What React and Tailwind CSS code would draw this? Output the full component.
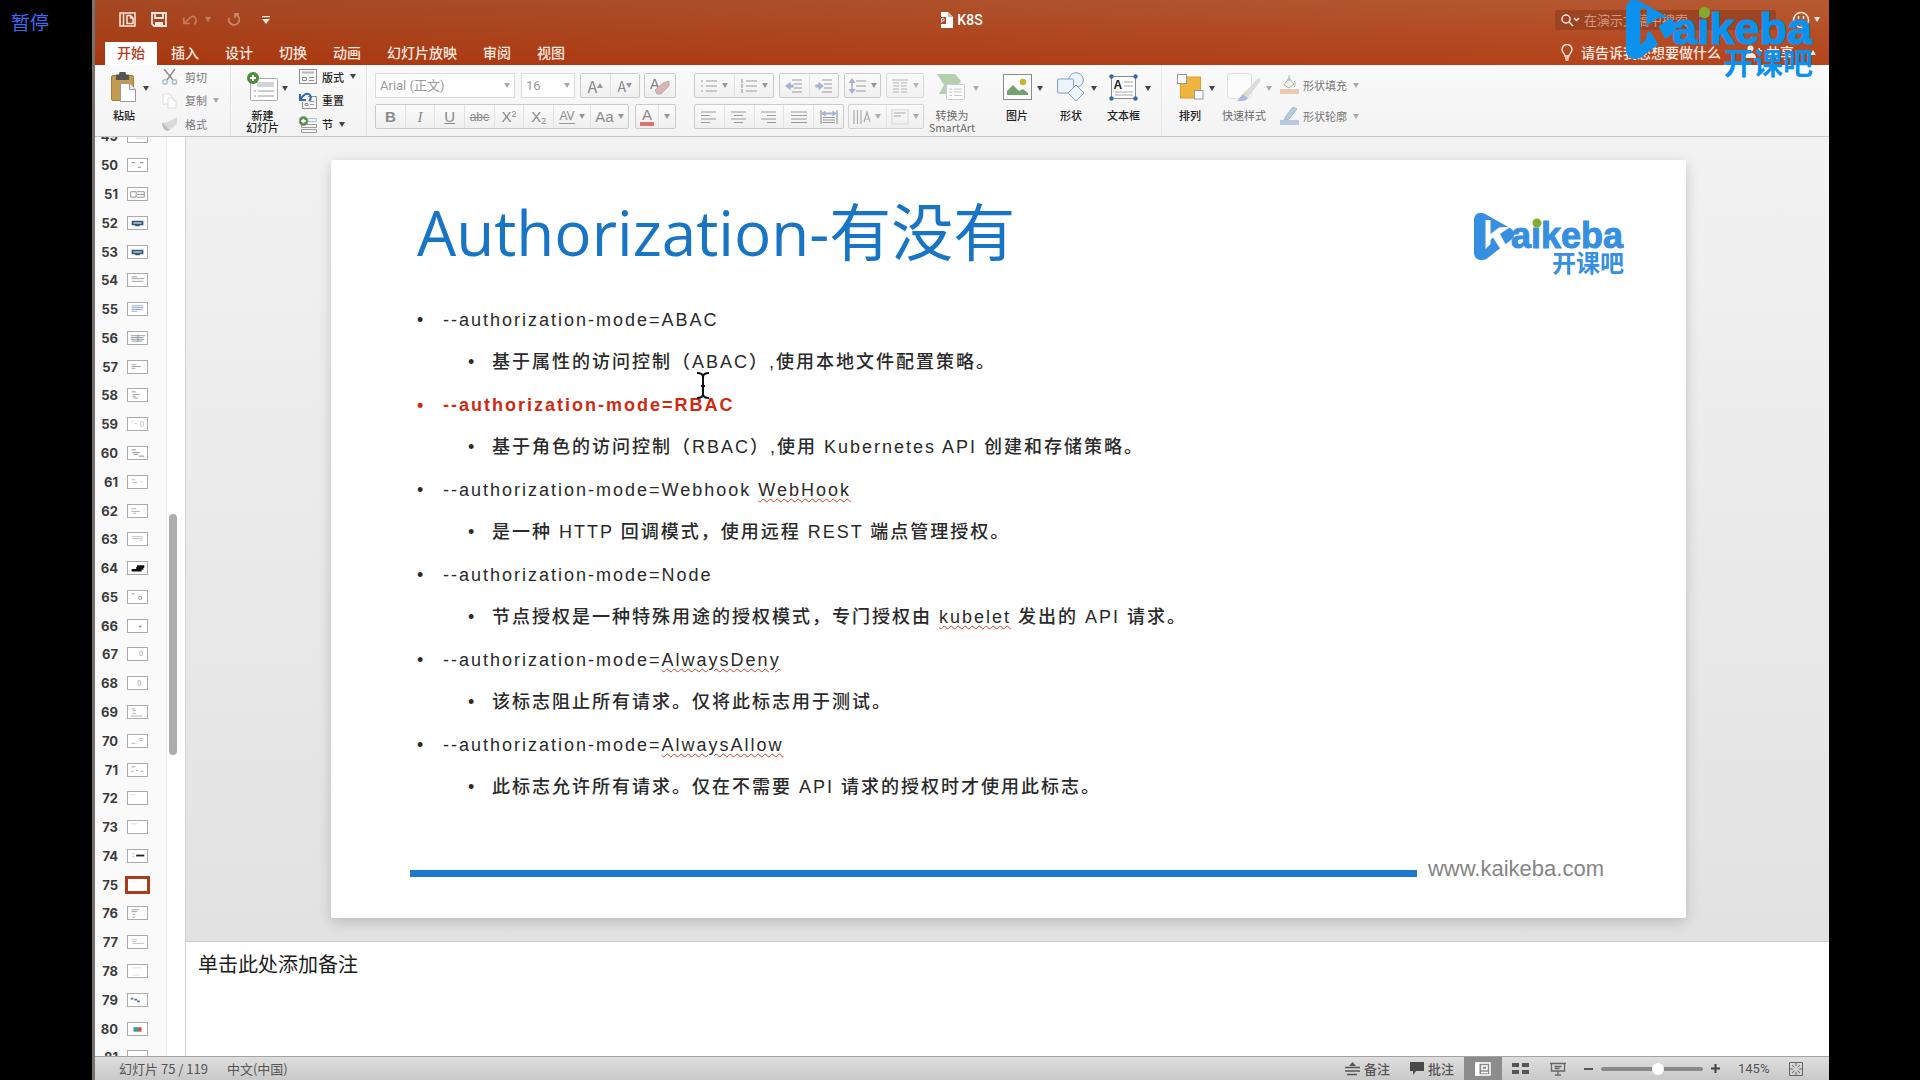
import React from "react";

const Caret = ({ className = "text-[#444]" }) => (
  <svg viewBox="0 0 6 5" className={`h-[5px] w-[6px] shrink-0 ${className}`} aria-hidden="true">
    <path d="M0 0h6L3 5z" fill="currentColor" />
  </svg>
);

const Logo = ({ id, className }) => (
  <svg viewBox="0 0 150 60" className={`overflow-visible ${className}`} role="img" aria-label="kaikeba 开课吧">
    <mask id={id}>
      <rect width="150" height="60" fill="#fff" />
      <path d="M11.500 7H16.500V21L25 14.500 37 13.500 26 21 32 32 27 37 19 24.500 16.500 27V31L11.500 36Z" fill="#000" />
    </mask>
    <path
      d="M0 8C0 0 6 -2 12 1.500L36 15C41.500 18.500 41.500 24 37 27L13 45.500C8 49 0 47 0 40Z"
      fill="currentColor"
      mask={`url(#${id})`}
    />
    <text x="37" y="35" fontFamily="'Liberation Sans', Arial, sans-serif" fontWeight="700" fontSize="36" fill="currentColor" stroke="currentColor" strokeWidth="1">
      aikeba
    </text>
    <circle cx="63" cy="10" r="4.500" fill="#84ab2e" />
    <text x="78" y="59" fontFamily="'Noto Sans CJK SC', sans-serif" fontWeight="700" fontSize="24" fill="currentColor">
      开课吧
    </text>
  </svg>
);

/* ---------- title bar ---------- */

const IconButton = ({ label, className = "", children }) => (
  <button type="button" aria-label={label} className={`flex items-center justify-center ${className}`}>
    {children}
  </button>
);

const TitleBar = () => (
  <div className="flex h-[42px] items-center pb-[3px]">
    <div className="flex w-[180px] items-center pl-6 text-[#fbe9e0]">
      <IconButton label="文件" className="w-[17px]">
        <svg viewBox="0 0 17 15" className="h-[15px] w-[17px]" fill="none" stroke="currentColor" strokeWidth="1.500">
          <path d="M1 1h15v13H1zM4.500 1v13M8 3.500h3.500L14 6v5.500H8zM11.500 3.500V6H14" />
        </svg>
      </IconButton>
      <IconButton label="保存" className="ml-[15px] w-4">
        <svg viewBox="0 0 16 15" className="h-[15px] w-4" fill="none" stroke="currentColor" strokeWidth="1.800">
          <path d="M1 1h14v13H3L1 12zM4 1v5h8V1" />
          <path d="M4 14v-4h8v4z" fill="currentColor" stroke="none" />
        </svg>
      </IconButton>
      <IconButton label="撤消" className="ml-4 w-7 gap-2 opacity-35">
        <svg viewBox="0 0 16 14" className="h-[14px] w-4" fill="none" stroke="currentColor" strokeWidth="1.800">
          <path d="M1 4v7h7M1.500 10.500L8 4.500C11 1.500 15 3 15 7.500c0 2-1 3.500-2 4.500" />
        </svg>
        <Caret className="h-1 w-1" />
      </IconButton>
      <IconButton label="恢复" className="ml-[15px] w-[14px] opacity-40">
        <svg viewBox="0 0 14 14" className="h-[14px] w-[14px]" fill="none" stroke="currentColor" strokeWidth="1.800">
          <path d="M9 5V1h4M9.500 1.500A5.300 5.300 0 1 1 3 5" />
        </svg>
      </IconButton>
      <IconButton label="自定义" className="ml-[22px] w-2">
        <svg viewBox="0 0 8 8" className="h-2 w-2" fill="currentColor">
          <path d="M0 0h8v1.200H0zM0 3h8L4 8z" />
        </svg>
      </IconButton>
    </div>
    <div className="flex flex-1 items-center justify-center gap-1 pl-[92px] text-sm font-medium text-white">
      <svg viewBox="0 0 14 16" className="h-4 w-[14px]">
        <path d="M2 0h7l5 5v11H2z" fill="#fff" />
        <path d="M9 0l5 5H9z" fill="#c9b6ae" />
        <path d="M0 5h7v7H0z" fill="#b9401d" />
        <path d="M2.500 10.500v-4h1.500a1.200 1.200 0 0 1 0 2.400H2.500" stroke="#fff" fill="none" />
      </svg>
      <h1 className="font-['Roboto']">K8S</h1>
    </div>
    <div className="flex items-center pr-[9px]">
      <label className="flex h-5 w-[221px] items-center rounded-xs bg-[#97401f]/80 pl-[5px] text-[#fbe9e0]">
        <svg viewBox="0 0 20 14" className="h-[14px] w-5 shrink-0" fill="none" stroke="currentColor" strokeWidth="1.500">
          <circle cx="6" cy="6" r="4" />
          <path d="M9 9l4 4M14 5l2.500 2.500L19 5" />
        </svg>
        <input
          aria-label="在演示文稿中搜索"
          placeholder="在演示文稿中搜索"
          className="ml-1 w-full min-w-0 bg-transparent text-[13px] outline-none placeholder:text-[#d49a80]"
        />
      </label>
      <IconButton label="反馈" className="ml-4 gap-1 text-[#fbe9e0]">
        <svg viewBox="0 0 18 18" className="h-[18px] w-[18px]" fill="none" stroke="currentColor" strokeWidth="1.500">
          <circle cx="9" cy="9" r="7.500" />
          <path d="M5.500 10.500c1 3 6 3 7 0M6.500 5v3M11.500 5v3" />
        </svg>
        <Caret className="" />
      </IconButton>
    </div>
  </div>
);

const TABS = ["开始", "插入", "设计", "切换", "动画", "幻灯片放映", "审阅", "视图"];

const TabBar = () => (
  <nav className="flex h-[23px] items-stretch pl-[10px] text-sm font-medium">
    <div className="flex flex-1 gap-[2px]">
      {TABS.map((tab, i) => (
        <button
          key={tab}
          type="button"
          className={`px-3 pb-[3px] leading-5 ${i === 0 ? "bg-white text-[#b83a16]" : "text-[#fbe9e0]"}`}
        >
          {tab}
        </button>
      ))}
    </div>
    <div className="flex w-[268px] items-center pb-[3px] leading-5 text-[#fbe9e0]">
      <button type="button" className="flex items-center gap-2 whitespace-nowrap">
        <svg viewBox="0 0 12 17" className="h-[17px] w-3" fill="none" stroke="currentColor" strokeWidth="1.400">
          <path d="M4 12c0-2-3-3.500-3-6.500a5 5 0 0 1 10 0C11 8.500 8 10 8 12zM4 14h4M4.500 16h3" />
        </svg>
        <span>请告诉我您想要做什么</span>
      </button>
      <button type="button" className="ml-6 flex items-center gap-1 whitespace-nowrap">
        <svg viewBox="0 0 17 14" className="h-[14px] w-[17px]" fill="currentColor">
          <circle cx="5.500" cy="3.500" r="3" />
          <path d="M0 13c0-7 11-7 11 0zM12 5h1.500V3H15v2h2v1.500h-2v2h-1.500v-2H12z" />
        </svg>
        <span>共享</span>
      </button>
      <IconButton label="折叠功能区" className="ml-4 rotate-180">
        <Caret className="" />
      </IconButton>
    </div>
  </nav>
);

/* ---------- ribbon ---------- */

const Big = ({ label, icon, width, dim, caret = true }) => (
  <button
    type="button"
    className={`flex shrink-0 items-start pt-[7px] text-[11px] leading-3 ${dim ? "text-[#6b6b6b]" : "font-medium text-[#222]"}`}
  >
    <span className={`flex flex-col items-center ${width}`}>
      <span className="flex h-[30px] items-center">{icon}</span>
      <span className="mt-[7px] whitespace-pre text-center">{label}</span>
    </span>
    {caret && <Caret className={`mt-[14px] ${dim ? "text-[#aaa]" : "text-[#444]"}`} />}
  </button>
);

const Small = ({ label, icon, dim, caret, h = "h-6" }) => (
  <button
    type="button"
    className={`flex items-center text-[11px] ${h} ${dim ? "text-[#777]" : "font-medium text-[#222]"}`}
  >
    <span className="w-5">{icon}</span>
    <span className="ml-[3px] whitespace-nowrap">{label}</span>
    {caret && <Caret className={`ml-[6px] ${dim ? "text-[#aaa]" : "text-[#444]"}`} />}
  </button>
);

const PasteIcon = (
  <svg viewBox="0 0 26 30" className="h-[30px] w-[26px]">
    <rect x="0.500" y="3.500" width="22" height="25" rx="1.500" fill="#c39a52" stroke="#a67e38" />
    <path d="M5 2.500h3a3.500 3.500 0 0 1 7 0h3V8H5z" fill="#555" />
    <path d="M9.500 11.500h9l6 6v12h-15z" fill="#fff" stroke="#9a9a9a" />
    <path d="M18.500 11.500v6h6" fill="#eee" stroke="#9a9a9a" />
  </svg>
);
const CutIcon = (
  <svg viewBox="0 0 16 16" className="h-4 w-4" fill="none" strokeWidth="1.500">
    <path d="M2 0l9 11M13 0L5 11" stroke="#8c8c8c" />
    <circle cx="3" cy="13" r="2.200" stroke="#a9bfd4" />
    <circle cx="12.500" cy="13" r="2.200" stroke="#a9bfd4" />
  </svg>
);
const CopyIcon = (
  <svg viewBox="0 0 16 16" className="h-4 w-4" fill="#fff" stroke="#dcdcdc">
    <path d="M1 1h6l3 3v7H1z" />
    <path d="M6 5h5l3 3v7H6zM11 5v3h3" />
  </svg>
);
const BrushIcon = (
  <svg viewBox="0 0 16 16" className="h-4 w-4">
    <path d="M15 1v7l-7 6C5 14 1 11 0 7l6-1z" fill="#dadada" />
    <path d="M0 7l8 7-3 1C2 14 0 11 0 7z" fill="#bdbdbd" />
  </svg>
);
const Plus = ({ x, y, r }) => (
  <g>
    <circle cx={x} cy={y} r={r} fill="#4c8f3c" />
    <path d={`M${x - r / 2} ${y}h${r}M${x} ${y - r / 2}v${r}`} stroke="#fff" strokeWidth="1.800" />
  </g>
);
const NewSlideIcon = (
  <svg viewBox="0 0 32 30" className="h-[30px] w-8">
    <rect x="3.500" y="6.500" width="27" height="22" rx="1" fill="#fff" stroke="#a8a8a8" />
    <rect x="10" y="10" width="17" height="5" fill="#d2d5d8" />
    <path d="M7 19h2M11 19h16M7 24h2M11 24h16" stroke="#999" />
    <Plus x={6} y={6} r={6} />
  </svg>
);
const LayoutIcon = (
  <svg viewBox="0 0 18 15" className="h-[15px] w-[18px]" fill="none" stroke="#8f8f8f">
    <rect x="0.500" y="0.500" width="17" height="14" fill="#f6f6f6" />
    <path d="M3 3.500h12" stroke="#b5b5b5" strokeWidth="2" />
    <path d="M3.500 8.500h4v3h-4zM10 8.500h5M10 11.500h5" />
  </svg>
);
const ResetIcon = (
  <svg viewBox="0 0 18 18" className="h-[18px] w-[18px]" fill="none">
    <path d="M9 4.500h8.500v12h-14V10" fill="#f6f6f6" stroke="#8f8f8f" />
    <path d="M6 11.500h3v2H6zM11 9.500h4M11 12.500h4" stroke="#999" />
    <path d="M1 2v6h6M1.500 7.500C4 3 8 0 11 3c1.500 2 1 4-1 6" stroke="#2f6cb5" strokeWidth="2" />
  </svg>
);
const SectionIcon = (
  <svg viewBox="0 0 18 17" className="h-[17px] w-[18px]" fill="none" stroke="#9c9c9c">
    <path d="M9 2.500h8.500v3H9" stroke="#a9c3dd" />
    <path d="M2.500 8.500h15v3h-15zM2.500 13.500h15v3h-15z" fill="#f6f6f6" />
    <Plus x={4.500} y={5} r={4.500} />
  </svg>
);

const Bar = ({ children, className = "" }) => (
  <div
    className={`flex h-[25px] items-stretch divide-x divide-[#e2e2e2] rounded-xs border border-[#cbcbcb] bg-linear-to-b from-[#fbfbfb] to-[#efefef] text-[#8a8a8a] ${className}`}
  >
    {children}
  </div>
);

const BarButton = ({ label, children, caret, className = "flex-1" }) => (
  <button type="button" aria-label={label} className={`flex items-center justify-center gap-1 ${className}`}>
    {children}
    {caret && <Caret className="h-1 w-[5px] text-[#999]" />}
  </button>
);

const Lines = ({ d, extra, children }) => (
  <svg viewBox="0 0 18 16" className="h-4 w-[18px]" fill="none" stroke="#9a9a9a" strokeWidth="1.200">
    <path d={d} />
    {extra && <path d={extra} fill="#a3b4d4" stroke="#a3b4d4" />}
    {children}
  </svg>
);

const Picker = ({ label, value, className }) => (
  <div className={`relative h-[25px] border border-[#dcdcdc] bg-white ${className}`}>
    <select
      aria-label={label}
      className="block h-[23px] w-full appearance-none bg-transparent pl-1 font-['Roboto','Noto_Sans_CJK_SC',sans-serif] text-[13px] text-[#9a9a9a]"
    >
      <option>{value}</option>
    </select>
    <Caret className="pointer-events-none absolute top-[9px] right-1 text-[#aaa]" />
  </div>
);

const FontGroup = () => (
  <div className="flex w-[302px] shrink-0 flex-col gap-[6px] pt-2">
    <div className="flex items-start">
      <Picker label="字体" value="Arial (正文)" className="w-[140px]" />
      <Picker label="字号" value="16" className="ml-[6px] w-[54px]" />
      <Bar className="ml-[5px] w-[60px]">
        <BarButton label="增大字号">
          <span className="text-base leading-5">A</span>
          <span className="-ml-1 rotate-180">
            <Caret className="text-[#999]" />
          </span>
        </BarButton>
        <BarButton label="减小字号">
          <span className="text-sm leading-5">A</span>
          <span className="-ml-1">
            <Caret className="text-[#999]" />
          </span>
        </BarButton>
      </Bar>
      <Bar className="ml-1 w-8">
        <BarButton label="清除格式">
          <svg viewBox="0 0 20 18" className="h-[18px] w-5">
            <text x="0" y="12" fontSize="14" fontFamily="Liberation Sans" fill="#808080">A</text>
            <path d="M5 13l8-7 6-2v5l-8 8-4 0z" fill="#d9b5b5" stroke="#b9a3a3" strokeWidth="0.800" />
          </svg>
        </BarButton>
      </Bar>
    </div>
    <div className="flex">
      <Bar className="w-[254px] font-['Liberation_Sans'] text-[15px] leading-5">
        <BarButton label="加粗"><b>B</b></BarButton>
        <BarButton label="倾斜"><i className="font-['Liberation_Serif']">I</i></BarButton>
        <BarButton label="下划线"><u>U</u></BarButton>
        <BarButton label="删除线"><s className="text-xs">abc</s></BarButton>
        <BarButton label="上标"><span>X<sup className="text-[9px]">2</sup></span></BarButton>
        <BarButton label="下标"><span>X<sub className="text-[9px]">2</sub></span></BarButton>
        <BarButton label="字符间距" caret className="w-[37px]">
          <span className="border-b border-[#999] text-xs leading-[13px]">AV</span>
        </BarButton>
        <BarButton label="更改大小写" caret className="w-[37px]"><span>Aa</span></BarButton>
      </Bar>
      <Bar className="ml-[6px] w-[41px]">
        <BarButton label="字体颜色">
          <span className="border-b-4 border-[#d9756a] px-[2px] font-['Liberation_Sans'] text-[15px] leading-[15px]">A</span>
        </BarButton>
        <BarButton label="字体颜色选项" className="w-4"><Caret className="text-[#999]" /></BarButton>
      </Bar>
    </div>
  </div>
);

const ParagraphGroup = () => (
  <div className="ml-[17px] flex w-[230px] shrink-0 flex-col gap-[6px] pt-2">
    <div className="flex justify-between">
      <Bar className="w-[80px]">
        <BarButton label="项目符号" caret><Lines d="M6 3h11M6 8h11M6 13h11M1 3h2M1 8h2M1 13h2" /></BarButton>
        <BarButton label="编号" caret><Lines d="M6 3h11M6 8h11M6 13h11M2 1v4M2 6v4M2 11v4" /></BarButton>
      </Bar>
      <Bar className="w-[60px]">
        <BarButton label="减少缩进"><Lines d="M7 2h10M9 6h8M9 10h8M7 14h10" extra="M1 8l4-3v2h3v2H5v2z" /></BarButton>
        <BarButton label="增加缩进"><Lines d="M7 2h10M9 6h8M9 10h8M7 14h10" extra="M8 8L4 5v2H1v2h3v2z" /></BarButton>
      </Bar>
      <Bar className="w-[37px]">
        <BarButton label="行距" caret><Lines d="M7 3h10M7 8h10M7 13h10M3 2v12" extra="M3 1l2.500 3.500h-5zM3 15l2.500-3.500h-5z" /></BarButton>
      </Bar>
      <Bar className="w-[38px] opacity-70">
        <BarButton label="分栏" caret><Lines d="M1 2h16M2 5h6M2 8h6M2 11h6M2 14h6M10 5h6M10 8h6M10 11h6M10 14h6" /></BarButton>
      </Bar>
    </div>
    <div className="flex justify-between">
      <Bar className="w-[150px]">
        <BarButton label="左对齐"><Lines d="M1 3h15M1 6.500h9M1 10h15M1 13.500h9" /></BarButton>
        <BarButton label="居中"><Lines d="M1 3h15M4 6.500h9M1 10h15M4 13.500h9" /></BarButton>
        <BarButton label="右对齐"><Lines d="M1 3h15M7 6.500h9M1 10h15M7 13.500h9" /></BarButton>
        <BarButton label="两端对齐"><Lines d="M1 3h16M1 6.500h16M1 10h16M1 13.500h16" /></BarButton>
        <BarButton label="分散对齐"><Lines d="M1 1v14M17 1v14M3 8.500h12M3 11h12M3 13.500h12" extra="M2 4.500l3-2v1.500h8V2.500l3 2-3 2V5H5v1.500z" /></BarButton>
      </Bar>
      <Bar className="w-[76px] opacity-80">
        <BarButton label="文字方向" caret>
          <Lines d="M1 1v14M4.500 1v14M8 1v14M11 13l3-10 3 10M12 10h4" />
        </BarButton>
        <BarButton label="对齐文本" caret><Lines d="M3 4h12M3 7h7" extra=""><rect x="1" y="1" width="16" height="14" stroke="#d6d6d6" /></Lines></BarButton>
      </Bar>
    </div>
  </div>
);

const SmartArtIcon = (
  <svg viewBox="0 0 30 26" className="h-[26px] w-[30px]">
    <path d="M0 0h18l6 7-5 7-3 6H2l5-9z" fill="#b5d0ae" />
    <rect x="9.500" y="10.500" width="18" height="15" rx="1" fill="#fdfdfd" stroke="#c9ced2" />
    <path d="M12 15h3M17 15h8M12 18h3M17 18h8M12 21.500h3M17 21.500h8" stroke="#c3c8cc" />
  </svg>
);
const PictureIcon = (
  <svg viewBox="0 0 29 26" className="h-[26px] w-[29px]">
    <rect x="0.500" y="0.500" width="28" height="25" fill="#fff" stroke="#8b8b8b" />
    <path d="M4 21v-4l6-6 6 6 4-2 5 4v2z" fill="#75a069" />
    <circle cx="20" cy="8" r="3.300" fill="#c7b431" />
  </svg>
);
const ShapesIcon = (
  <svg viewBox="0 0 28 30" className="h-[30px] w-7" fill="#eef4fb" stroke="#7d9dc8">
    <circle cx="19" cy="8" r="7.300" />
    <rect x="0.600" y="7" width="16" height="14" rx="1" />
    <path d="M19 13l8 8-8 8-8-8z" />
  </svg>
);
const TextBoxIcon = (
  <svg viewBox="0 0 29 27" className="h-[27px] w-[29px]">
    <rect x="2.500" y="2.500" width="24" height="22" fill="#fff" stroke="#8b8b8b" />
    <text x="4.500" y="15" fontSize="12" fontWeight="700" fontFamily="Liberation Sans" fill="#222">A</text>
    <path d="M15 8h9M15 12h9M6 18h18M6 21h18" stroke="#a6a6a6" />
    <g fill="#3867ad">
      <circle cx="2.500" cy="2.500" r="2.200" />
      <circle cx="26.500" cy="2.500" r="2.200" />
      <circle cx="2.500" cy="24.500" r="2.200" />
      <circle cx="26.500" cy="24.500" r="2.200" />
    </g>
  </svg>
);
const ArrangeIcon = (
  <svg viewBox="0 0 27 26" className="h-[26px] w-[27px]">
    <rect x="3.500" y="3" width="20" height="21" fill="#efb540" stroke="#dd9f28" />
    <rect x="0.500" y="0.500" width="9" height="9" fill="#fff" stroke="#999" />
    <rect x="17.500" y="16.500" width="8.500" height="8.500" fill="#fff" stroke="#999" />
  </svg>
);
const StylesIcon = (
  <svg viewBox="0 0 34 30" className="h-[30px] w-[34px]">
    <rect x="0.500" y="1.500" width="24" height="25" rx="3" fill="#fcfcfc" stroke="#dedede" />
    <path d="M31 6l3 2-11 15-5-3z" fill="#dcdcdc" />
    <path d="M18 19l5 4-2 3-5-4z" fill="#e4dcb8" />
    <path d="M16 22l5 4c-3 4-7 3-11 3 3-2 3-5 6-7z" fill="#a9b9e0" />
  </svg>
);
const FillIcon = (
  <svg viewBox="0 0 19 20" className="h-5 w-[19px]">
    <rect y="14" width="19" height="5" fill="#ecc9b2" />
    <path d="M9 3l5 6-5 4-5-3zM9 0v6" fill="#eef0ef" stroke="#a9b5b2" />
    <path d="M14 6c2 2 1 5 0 6" stroke="#93b5b0" fill="none" />
  </svg>
);
const OutlineIcon = (
  <svg viewBox="0 0 19 20" className="h-5 w-[19px]">
    <rect y="14" width="19" height="5" fill="#b9c8e6" />
    <path d="M13 1l4 2-8 10-5 1 2-4z" fill="#b9cbe0" stroke="#94a9c4" strokeWidth="0.800" />
  </svg>
);

const Ribbon = () => (
  <section aria-label="功能区" className="flex h-[72px] shrink-0 overflow-hidden border-b border-[#c6c6c6] bg-linear-to-b from-[#fafafa] to-[#f3f3f3]">
    <div className="flex w-[136px] shrink-0 border-r border-[#e4e4e4] pl-[10px]">
      <Big label="粘贴" icon={PasteIcon} width="w-[38px]" />
      <div className="ml-[13px] flex flex-col">
        <Small label="剪切" icon={CutIcon} dim />
        <Small label="复制" icon={CopyIcon} dim caret />
        <Small label="格式" icon={BrushIcon} dim />
      </div>
    </div>
    <div className="flex w-[136px] shrink-0 border-r border-[#e4e4e4] pl-3">
      <Big label={"新建\n幻灯片"} icon={NewSlideIcon} width="w-[39px]" />
      <div className="ml-[11px] flex flex-col">
        <Small label="版式" icon={LayoutIcon} caret />
        <Small label="重置" icon={ResetIcon} />
        <Small label="节" icon={SectionIcon} caret />
      </div>
    </div>
    <div className="flex shrink-0 border-r border-[#e9e9e9] pl-2">
      <FontGroup />
      <ParagraphGroup />
      <div className="ml-[7px] flex w-[66px]">
        <Big label={"转换为\nSmartArt"} icon={SmartArtIcon} width="w-[42px]" dim />
      </div>
      <div className="flex w-[164px]">
        <div className="w-[54px]"><Big label="图片" icon={PictureIcon} width="w-[40px]" /></div>
        <div className="w-[51px]"><Big label="形状" icon={ShapesIcon} width="w-[40px]" /></div>
        <div className="w-[56px]"><Big label="文本框" icon={TextBoxIcon} width="w-[43px]" /></div>
      </div>
    </div>
    <div className="flex shrink-0 pl-[9px]">
      <div className="w-[51px]"><Big label="排列" icon={ArrangeIcon} width="w-[38px]" /></div>
      <div className="w-[58px]"><Big label="快速样式" icon={StylesIcon} width="w-[44px]" dim /></div>
      <div className="flex flex-col gap-[7px] pt-2">
        <Small label="形状填充" icon={FillIcon} dim caret />
        <Small label="形状轮廓" icon={OutlineIcon} dim caret />
      </div>
    </div>
  </section>
);

/* ---------- slide list ---------- */

const SKETCH = {
  50: [["M4 4h4M13 4h4M11 9h3", "#777"]],
  51: [["M3 4h6v6H3zM10 4h8v6h-8M10 7h8", "#888"]],
  52: [["M5 5h11v3H5zM8 9h5", "#33577d", 2]],
  53: [["M5 5h11v3H5zM8 9h5", "#33577d", 2]],
  54: [["M4 3h6M4 5h14M4 8h13", "#999"]],
  55: [["M4 3h13M4 5h13M4 7h12M4 9h6", "#8a9ecb"]],
  56: [["M3 4h16M3 6h14M3 8h15M11 3v8M4 10h12", "#8a93a3"]],
  57: [["M4 4h5M4 6h10M4 8h4", "#999"]],
  58: [["M4 3h5M5 6h8M5 8h4M6 10h5", "#999"]],
  59: [["M4 4h2M7 6h3M14 4h3v5h-3z", "#ccc"]],
  60: [["M4 3h5M5 6h8M6 8h5M12 10h6", "#888"]],
  61: [["M4 4h4M5 7h5M14 6h2", "#bbb"]],
  62: [["M4 4h5M4 7h9M6 9h3", "#aaa"]],
  63: [["M4 4h12M5 6h11M13 8h3", "#bbb"]],
  64: [["M10 5h8M4 9h11M9 7h8", "#111", 3]],
  65: [["M4 3h3M12 6h3v3h-3z", "#999"]],
  66: [["M12 7h3", "#999", 2]],
  67: [["M13 4h3v4h-3z", "#bbb"]],
  68: [["M11 4h3v5h-3z", "#bbb"]],
  69: [["M4 3h4M5 5h4M5 8h4M3 11h13", "#aaa"]],
  70: [["M12 4h5M13 6h3M4 9h4", "#aaa"]],
  71: [["M4 3h4M4 8h2M9 7h2M14 8h3", "#999"]],
  72: [["M3 3h5", "#ddd"]],
  73: [["M3 3h7", "#ddd"]],
  74: [["M5 4h2M5 7h2", "#bbb"], ["M9 6h9", "#222", 2]],
  75: [["M3 3h8", "#eee"]],
  76: [["M4 3h8M4 5h6M5 8h3M5 11h3", "#999"]],
  77: [["M4 4h6M5 6h4M5 8h13", "#bbb"]],
  78: [["M5 3h10M5 11h8", "#ddd"]],
  79: [["M3 5h3M7 6h3M10 8h3", "#5a6f8f", 2]],
  80: [["M6 7h5", "#3c9a9a", 5], ["M11 7h4", "#c65c48", 5]],
};

const SlideThumb = ({ number }) => {
  const active = number === 75;
  return (
    <li className="flex flex-1 items-center">
      <button type="button" aria-current={active ? "true" : undefined} className="flex items-center">
        <span className="w-[23px] text-right font-['Inter'] text-[13px] leading-4 font-bold text-[#3c3c3c]">{number}</span>
        <span
          className={`flex bg-white ${
            active ? "ml-[7px] border-3 border-[#ad3b17]" : "ml-[9px] border border-[#ababab]"
          }`}
        >
          <svg viewBox="0 0 21 13" className="h-3 w-[19px]" fill="none">
            {(SKETCH[number] || [["M9 9h10", "#ccc"]]).map(([d, color, width = 1]) => (
              <path key={d} d={d} stroke={color} strokeWidth={width} />
            ))}
          </svg>
        </span>
      </button>
    </li>
  );
};

const SlideList = () => (
  <aside aria-label="幻灯片列表" className="flex w-[91px] shrink-0 overflow-hidden border-r border-[#d2d2d2] bg-[#fafafa]">
    <ol className="-mt-[15px] flex h-[950px] w-[72px] flex-col border-r border-[#eeeeee]">
      {Array.from({ length: 33 }, (_, i) => (
        <SlideThumb key={i} number={49 + i} />
      ))}
    </ol>
    <div className="flex flex-1 bg-white pt-[377px] pl-[2px]">
      <div className="h-[241px] w-2 rounded-full bg-[#adadad]" />
    </div>
  </aside>
);

/* ---------- slide ---------- */

const Typo = ({ children }) => (
  <span className="underline decoration-[#d0402c] decoration-wavy decoration-1 underline-offset-2">{children}</span>
);

const LINES = [
  { head: "--authorization-mode=ABAC", body: "基于属性的访问控制（ABAC）,使用本地文件配置策略。" },
  {
    head: "--authorization-mode=RBAC",
    body: "基于角色的访问控制（RBAC）,使用 Kubernetes API 创建和存储策略。",
    strong: true,
  },
  {
    head: <>--authorization-mode=Webhook <Typo>WebHook</Typo></>,
    body: "是一种 HTTP 回调模式，使用远程 REST 端点管理授权。",
  },
  {
    head: "--authorization-mode=Node",
    body: <>节点授权是一种特殊用途的授权模式，专门授权由 <Typo>kubelet</Typo> 发出的 API 请求。</>,
  },
  { head: <>--authorization-mode=<Typo>AlwaysDeny</Typo></>, body: "该标志阻止所有请求。仅将此标志用于测试。" },
  {
    head: <>--authorization-mode=<Typo>AlwaysAllow</Typo></>,
    body: "此标志允许所有请求。仅在不需要 API 请求的授权时才使用此标志。",
  },
];

const Slide = () => (
  <article className="relative mt-[23px] mr-[143px] mb-[23px] ml-[145px] flex flex-1 flex-col rounded-xs bg-white shadow-[0_4px_14px_rgba(0,0,0,0.18)]">
    <header className="flex items-start justify-between pr-[62px] pl-[86px]">
      <h2 className="mt-[27px] font-['Open_Sans','Noto_Sans_CJK_SC',sans-serif] text-[62px] leading-[90px] text-[#1874c4]">
        Authorization-有没有
      </h2>
      <Logo id="slide-logo" className="mt-[53px] h-[60px] w-[150px] text-[#368fe0]" />
    </header>
    <ul className="mt-[22px] flex flex-col pl-[86px] font-['Liberation_Sans','Noto_Sans_CJK_SC',sans-serif] text-[18px] tracking-[2px] text-[#2a2a2a]">
      {LINES.map(({ head, body, strong }, i) => (
        <li key={i}>
          <div className={`flex leading-[42px] ${strong ? "font-bold text-[#cf2a10]" : ""}`}>
            <span className="w-[26px]">•</span>
            <p>{head}</p>
          </div>
          <ul>
            <li className="flex pl-[51px] leading-[43px] font-medium">
              <span className="w-6">•</span>
              <p>{body}</p>
            </li>
          </ul>
        </li>
      ))}
    </ul>
    <footer className="mt-auto mb-[33px] flex items-end pr-[82px] pl-[79px]">
      <div className="mb-2 h-[7px] flex-1 bg-[#1b7ad0]" />
      <p className="ml-[11px] font-['Liberation_Sans'] text-[22px] leading-8 text-[#858585]">www.kaikeba.com</p>
    </footer>
    <svg viewBox="0 0 14 27" className="absolute top-[212px] left-[365px] h-[27px] w-[14px]" fill="none" stroke="#111" strokeWidth="2" aria-hidden="true">
      <path d="M1 1c4 0 6 1.500 6 4 0-2.500 2-4 6-4M7 5v17M1 26c4 0 6-1.500 6-4 0 2.500 2 4 6 4M5 14h4" />
    </svg>
  </article>
);

/* ---------- status bar ---------- */

const StatusBar = () => (
  <footer className="flex h-6 shrink-0 items-center border-t border-[#a3a3a3] bg-linear-to-b from-[#dedede] to-[#c9c9c9] pr-[26px] pl-6 text-[13px] text-[#555]">
    <span>幻灯片 75 / 119</span>
    <span className="ml-[19px] flex-1">中文(中国)</span>
    <button type="button" className="flex items-center gap-1 font-medium">
      <svg viewBox="0 0 15 14" className="h-[14px] w-[15px]" stroke="#555" strokeWidth="1.300">
        <path d="M0 5.500h15M0 9h15M2 12.500h10" />
        <path d="M7.500 0l3.500 4H4z" fill="#555" stroke="none" />
      </svg>
      备注
    </button>
    <button type="button" className="ml-5 flex items-center gap-1 font-medium">
      <svg viewBox="0 0 14 13" className="h-[13px] w-[14px]" fill="#4a4a4a">
        <path d="M0 0h14v9H6l-3 4V9H0z" />
      </svg>
      批注
    </button>
    <button type="button" aria-label="普通视图" className="ml-[10px] flex h-full w-[38px] items-center justify-center bg-[#8c8c8c]">
      <svg viewBox="0 0 16 14" className="h-[14px] w-4" fill="none" stroke="#fff" strokeWidth="1.500">
        <path d="M1 1h14v12H1zM3.500 1v12M7 4h5v3.500H7zM6 10.500h7" />
        <path d="M1 1h2.500v12H1z" fill="#fff" />
      </svg>
    </button>
    <button type="button" aria-label="幻灯片浏览" className="ml-[10px]">
      <svg viewBox="0 0 17 13" className="h-[13px] w-[17px]" fill="#555">
        <path d="M0 1h7v4H0zM10 1h7v4h-7zM0 8h7v4H0zM10 8h7v4h-7z" />
      </svg>
    </button>
    <button type="button" aria-label="幻灯片放映" className="ml-[21px]">
      <svg viewBox="0 0 16 14" className="h-[14px] w-4" fill="none" stroke="#666" strokeWidth="1.300">
        <path d="M0 1.500h16M1.500 1.500v7.500h13V1.500M4.500 4.500h7M4.500 6.500h5M8 9v3M5 13h6" />
      </svg>
    </button>
    <button type="button" aria-label="缩小" className="ml-[18px] h-[2px] w-[9px] bg-[#555]" />
    <input
      type="range"
      aria-label="缩放"
      min="0"
      max="100"
      defaultValue="57"
      className="ml-2 h-3 w-[102px] appearance-none bg-transparent [&::-webkit-slider-runnable-track]:h-1 [&::-webkit-slider-runnable-track]:rounded-full [&::-webkit-slider-runnable-track]:bg-[#8a8a8a] [&::-webkit-slider-thumb]:-mt-1 [&::-webkit-slider-thumb]:h-3 [&::-webkit-slider-thumb]:w-3 [&::-webkit-slider-thumb]:appearance-none [&::-webkit-slider-thumb]:rounded-full [&::-webkit-slider-thumb]:bg-white"
    />
    <button type="button" aria-label="放大" className="ml-2">
      <svg viewBox="0 0 9 9" className="h-[9px] w-[9px]" stroke="#444" strokeWidth="2">
        <path d="M0 4.500h9M4.500 0v9" />
      </svg>
    </button>
    <span className="ml-[18px] w-[34px] font-['Roboto']">145%</span>
    <button type="button" aria-label="适应窗口" className="ml-[17px]">
      <svg viewBox="0 0 14 14" className="h-[14px] w-[14px]" fill="none" stroke="#666">
        <path d="M0.500 0.500h13v13H0.500zM7 1v3M7 10v3M1 7h3M10 7h3M3 3l2.500 2.500M11 3L8.500 5.500M3 11l2.500-2.500M11 11L8.500 8.500" />
      </svg>
    </button>
  </footer>
);

export default function App() {
  return (
    <div className="relative flex h-screen overflow-hidden bg-black font-['Noto_Sans_CJK_SC',sans-serif]">
      <div className="w-[92px] shrink-0 pt-2 pl-[11px] text-[19px] leading-7 text-[#4169f0]">暂停</div>
      <main className="flex min-w-0 flex-1 flex-col border-l-3 border-[#77706d] bg-[#f3f3f3]">
        <div className="shrink-0 bg-[linear-gradient(to_bottom,rgba(150,90,60,0.2),rgba(170,40,0,0.45)),linear-gradient(to_right,#a8441d,#bf5a31)]">
          <TitleBar />
          <TabBar />
        </div>
        <Ribbon />
        <div className="flex min-h-0 flex-1">
          <SlideList />
          <div className="flex min-w-0 flex-1 flex-col">
            <div className="flex min-h-0 flex-1 bg-linear-to-b from-[#f2f2f2] to-[#e2e2e2]">
              <Slide />
            </div>
            <textarea
              aria-label="备注"
              defaultValue="单击此处添加备注"
              className="h-[115px] resize-none border-t border-[#cfcfcf] bg-white px-3 pt-2 text-xl leading-7 text-[#1c1c1c] outline-none"
            />
          </div>
        </div>
        <StatusBar />
      </main>
      <div className="w-[91px] shrink-0" />
      <Logo id="overlay-logo" className="pointer-events-none absolute top-0 right-[107px] h-[75px] w-[187px] text-[#0b92ee]" />
    </div>
  );
}
